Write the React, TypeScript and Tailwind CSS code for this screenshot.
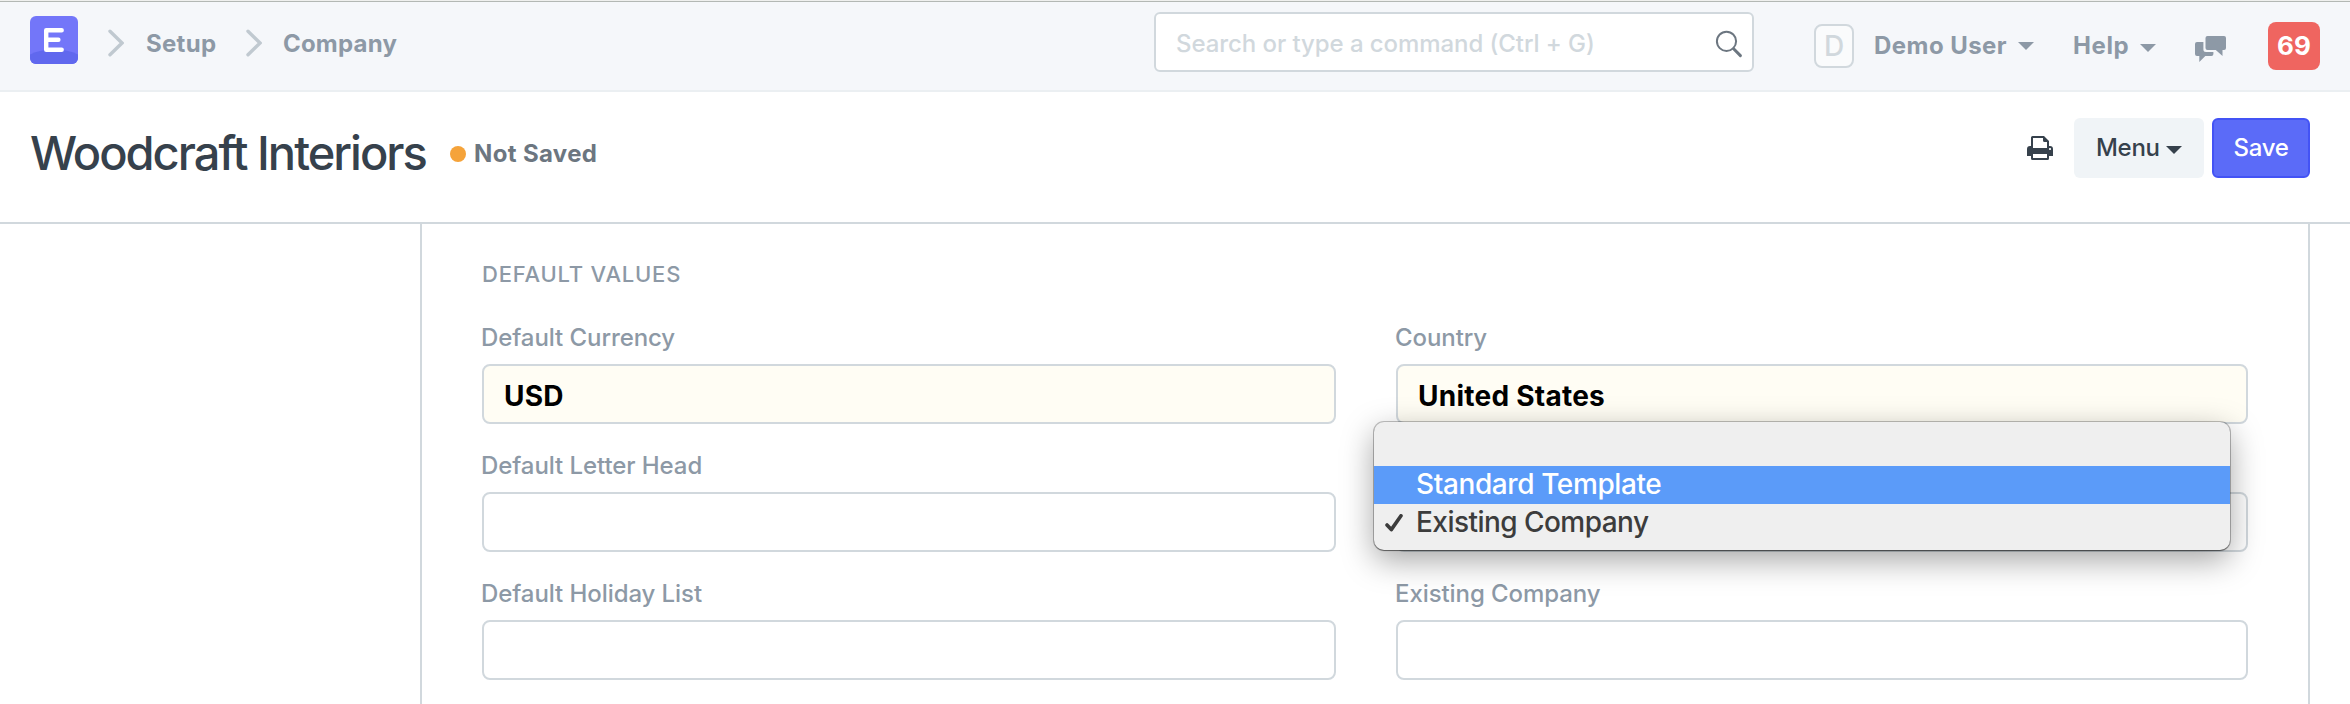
function Logo() {
  return (
    <svg className="block h-12 w-12 shrink-0" viewBox="0 0 48 48">
      <defs>
        <clipPath id="logo-shape">
          <rect width="48" height="48" rx="6" />
        </clipPath>
      </defs>
      <g clipPath="url(#logo-shape)">
        <rect width="48" height="48" fill="#7376f9" />
        <path d="M0 38.5Q10 33.5 24 33.5T48 38.5V48H0Z" fill="#6068ee" />
      </g>
      <path d="M31.7 14.2H16.2V33.8H31.7M16.2 23.8H28.4" fill="none" stroke="#fff" strokeWidth="4.4" strokeLinecap="round" strokeLinejoin="round" />
    </svg>
  );
}

function Chevron() {
  return (
    <svg className="block h-7 w-4 shrink-0" viewBox="0 0 16 28">
      <path d="M2 2.2L14 14L2 25.8" fill="none" stroke="#c0c9d0" strokeWidth="3.4" strokeLinecap="round" />
    </svg>
  );
}

function Caret() {
  return (
    <svg className="block h-2 w-4 shrink-0" viewBox="0 0 16 8">
      <path d="M0 0H16L8 8Z" fill="currentColor" />
    </svg>
  );
}

function SearchIcon() {
  return (
    <svg className="block h-7 w-7 shrink-0" viewBox="0 0 28 28">
      <circle cx="11.5" cy="11.3" r="9.6" fill="none" stroke="#6c7680" strokeWidth="2" />
      <path d="M18.6 18.8L25.4 25.6" stroke="#6c7680" strokeWidth="3" strokeLinecap="round" />
    </svg>
  );
}

function ChatIcon() {
  return (
    <svg className="block h-[26px] w-8 shrink-0" viewBox="0 0 32 26">
      <path d="M12.5 0H29Q31 0 31 2V12Q31 14 29 14H27.5V20L20.8 14H12.5Q10.5 14 10.5 12V2Q10.5 0 12.5 0Z" fill="#8d99a6" />
      <path d="M2 6H8.4V13.5Q8.4 16 11 16H18.4V18Q18.4 20 16.4 20H10.3L4.3 26V20H2Q0 20 0 18V8Q0 6 2 6Z" fill="#8d99a6" />
    </svg>
  );
}

function PrintIcon() {
  return (
    <svg className="block h-6 w-[26px] shrink-0" viewBox="0 0 26 24">
      <path
        fill="#36414c"
        fillRule="evenodd"
        d="M5.5 0H17L22 5V10H23Q26 10 26 13V20H22V22.5Q22 24 20.5 24H5.5Q4 24 4 22.5V20H0V13Q0 10 3 10H4V1.5Q4 0 5.5 0ZM6 2V12H20V6H17.5Q16 6 16 4.5V2ZM6 18V22H20V18Z"
      />
      <rect x="22" y="12" width="2" height="2" fill="#dfe3e6" />
    </svg>
  );
}

function Navbar() {
  return (
    <nav className="flex h-[91px] items-center border-t border-b-2 border-t-[#b3b8b4] border-b-[#ebeff2] bg-[#f5f7fa] font-bold text-[#8d99a6]">
      <div className="flex w-[1154px] items-center pb-3 pl-[30px]">
        <Logo />
        <div className="ml-[30px] mt-[5px]"><Chevron /></div>
        <div className="ml-[22px] mt-[8px] w-[100px] text-[24px] leading-6 tracking-[0.3px]">Setup</div>
        <div className="mt-[5px]"><Chevron /></div>
        <div className="ml-[21px] mt-[8px] text-[24px] leading-6 tracking-[0.2px]">Company</div>
      </div>
      <div className="mb-2 flex h-[60px] w-[600px] items-center rounded-md border-2 border-[#d1d8dd] bg-white">
        <div className="ml-5 w-[539px] pt-[4px] text-[24px] font-[450] leading-6 tracking-[-0.07px] text-[#d1d8dd]">Search or type a command (Ctrl + G)</div>
        <div className="mt-[4px]"><SearchIcon /></div>
      </div>
      <div className="ml-[60px] flex h-11 w-10 items-center justify-center rounded-lg border-2 border-[#d1d8dd] bg-[#fafbfc] text-[28px] font-medium leading-none text-[#d1d8dd]">D</div>
      <div className="ml-5 w-[144px] text-[24px] leading-6 tracking-[0.45px]">Demo User</div>
      <Caret />
      <div className="ml-[39px] w-[67px] text-[24px] leading-6 tracking-[0.6px]">Help</div>
      <div className="pt-1"><Caret /></div>
      <div className="ml-[39px] pt-[6px]"><ChatIcon /></div>
      <div className="ml-[41px] flex h-12 w-[52px] items-center justify-center rounded-lg bg-[#ef6560] text-[26px] leading-none text-white">69</div>
    </nav>
  );
}

function PageHead() {
  return (
    <header className="flex h-[132px] items-start border-b-2 border-[#d1d8dd]">
      <h1 className="ml-[30px] mt-[31px] w-[420px] whitespace-nowrap text-[47px] font-medium leading-[60px] tracking-[-2px] text-[#36414c]">Woodcraft Interiors</h1>
      <div className="mt-[54px] h-4 w-4 rounded-full bg-[#f5a33a]" />
      <div className="ml-2 mt-[32px] w-[1553px] text-[24px] font-bold leading-[60px] tracking-[0.35px] text-[#6c7680]">Not Saved</div>
      <div className="mt-11"><PrintIcon /></div>
      <button className="ml-[21px] mt-[26px] flex h-[60px] w-[130px] items-center rounded-md bg-[#f0f4f7] pl-[22px] text-[24px] font-[450] leading-6 tracking-[-0.3px] text-[#36414c]">
        <span className="w-[70px] text-left">Menu</span>
        <span className="pt-1"><Caret /></span>
      </button>
      <button className="ml-2 mt-[26px] flex h-[60px] w-[98px] items-center justify-center rounded-md border-2 border-[#4353f5] bg-[#5b6bf8] text-[24px] font-medium leading-6 tracking-[-0.3px] text-white">Save</button>
    </header>
  );
}

function Field({ label, value }: { label: string; value?: string }) {
  return (
    <div className="h-[114px]">
      <label className="-ml-px block h-[54px] pt-px text-[24px] font-[450] leading-[54px] tracking-[-0.08px] text-[#8d99a6]">{label}</label>
      <div className={`flex h-[60px] items-center rounded-lg border-2 border-[#d1d8dd] pl-5 pt-[3px] text-[28px] font-bold leading-8 tracking-[0.25px] text-black ${value ? "bg-[#fffdf4]" : "bg-white"}`}>
        {value}
      </div>
    </div>
  );
}

function TemplateMenu() {
  return (
    <div className="absolute -left-[22px] -top-[16px] h-[128px] w-[856px] rounded-[10px] bg-[#efefef] pt-11 text-[28px] font-[450] text-[#3c3c3c] shadow-[0_0_0_1px_rgba(0,0,0,0.24),0_1px_1px_rgba(0,0,0,0.4),0_10px_32px_rgba(0,0,0,0.36)]">
      <div className="h-[38px] bg-[#5b9bf9] pl-[42px] leading-[37px] tracking-[-0.4px] text-white">Standard Template</div>
      <div className="flex h-[38px] items-center">
        <svg className="ml-[11px] block h-[18px] w-[18px]" viewBox="0 0 18 18">
          <path d="M2 11L6.3 15.6L16 1.8" fill="none" stroke="#3c3c3c" strokeWidth="3.6" strokeLinecap="round" strokeLinejoin="round" />
        </svg>
        <span className="ml-[13px] pb-[2px] leading-8 tracking-[-0.54px]">Existing Company</span>
      </div>
    </div>
  );
}

export default function App() {
  return (
    <div className="flex h-[704px] w-[2350px] flex-col overflow-hidden bg-white" style={{ fontFamily: 'Inter, "Liberation Sans", sans-serif' }}>
      <div className="h-px bg-[#eff0ee]" />
      <Navbar />
      <PageHead />
      <main className="ml-[420px] h-[480px] w-[1890px] border-x-2 border-[#d1d8dd] pl-[60px]">
        <h2 className="h-[86px] pt-[25px] text-[22px] font-[450] leading-[50px] tracking-[0.8px] text-[#8d99a6]">DEFAULT VALUES</h2>
        <div className="grid grid-cols-[854px_852px] gap-x-[60px] gap-y-[14px]">
          <Field label="Default Currency" value="USD" />
          <Field label="Country" value="United States" />
          <Field label="Default Letter Head" />
          <div className="relative">
            <Field label="" />
            <TemplateMenu />
          </div>
          <Field label="Default Holiday List" />
          <Field label="Existing Company" />
        </div>
      </main>
    </div>
  );
}
